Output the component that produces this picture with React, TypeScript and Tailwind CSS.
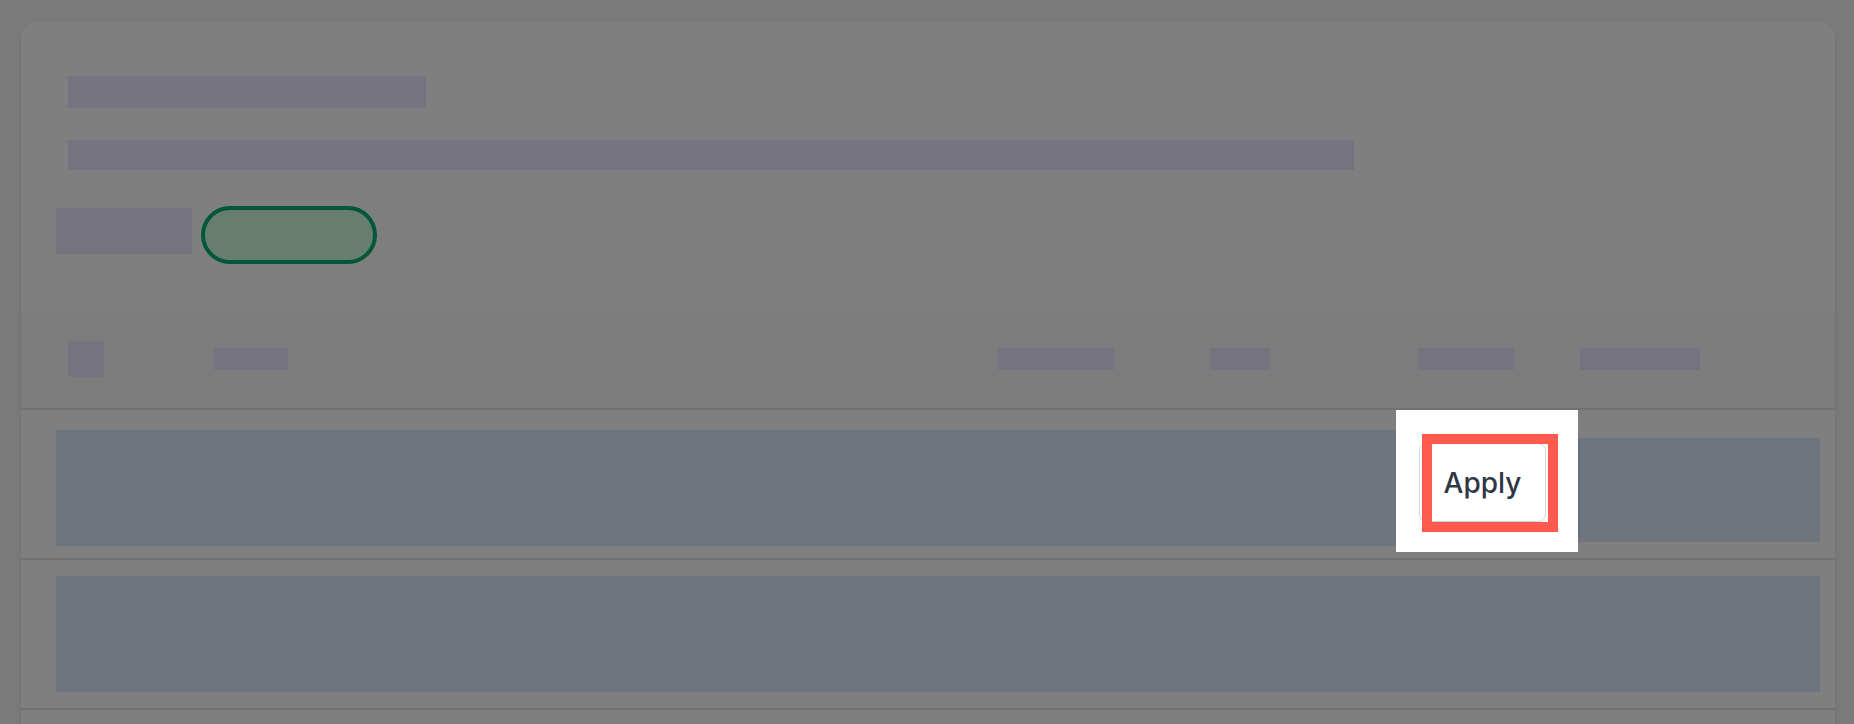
import React from "react";

const headerBars = [
  { ml: "ml-[110px]", w: "w-[74px]" },
  { ml: "ml-[710px]", w: "w-[116px]" },
  { ml: "ml-[96px]", w: "w-[60px]" },
  { ml: "ml-[148px]", w: "w-[96px]" },
  { ml: "ml-[66px]", w: "w-[120px]" },
];

export default function App() {
  return (
    <div
      className="relative h-[724px] overflow-hidden bg-[#f4f4f5] pt-[22px]"
      style={{ fontFamily: "Inter, 'Liberation Sans', sans-serif" }}
    >
      {/* Card */}
      <div className="ml-[21px] w-[1814px] overflow-hidden rounded-t-2xl bg-white shadow-md">
        {/* Top section */}
        <div className="px-[47px] pt-[54px] pb-[48px]">
          <div className="h-[32px] w-[358px] bg-[#eae7fe]" />
          <div className="mt-[32px] h-[30px] w-[1286px] bg-[#eae7fe]" />
          <div className="-ml-[12px] mt-[36px] flex items-start gap-[9px]">
            <div className="mt-[2px] h-[46px] w-[136px] bg-[#eae7fe]" />
            <div className="h-[58px] w-[176px] rounded-full border-4 border-[#00ae74] bg-[#cefadf]" />
          </div>
        </div>

        {/* Table header */}
        <div className="flex h-[98px] items-center border-b-2 border-[#e2e2e2] bg-[#f8f8f8] pb-[2px]">
          <div className="ml-[47px] h-[36px] w-[36px] rounded-sm bg-[#eae7fe]" />
          {headerBars.map((b, i) => (
            <div key={i} className={`${b.ml} ${b.w} h-[22px] bg-[#eae7fe]`} />
          ))}
        </div>

        {/* Rows */}
        <div className="border-b-2 border-[#e2e2e2] pt-[20px] pb-[12px] pl-[35px] pr-[15px]">
          <div className="flex h-[116px] items-start">
            <div className="h-[116px] w-[1341px] border-r border-[#cfe3fb] bg-[#dceaff]" />
            <div className="ml-[181px] mt-[8px] h-[104px] flex-1 border-l-2 border-[#cfe3fb] bg-[#dceaff]" />
          </div>
        </div>
        <div className="border-b-2 border-[#e2e2e2] py-[16px] pl-[35px] pr-[15px]">
          <div className="h-[116px] bg-[#dceaff]" />
        </div>
        <div className="h-[40px]" />
      </div>

      {/* Dim overlay */}
      <div className="absolute inset-0 bg-black/50" />

      {/* Spotlight on the Apply button */}
      <div className="absolute top-[410px] left-[1396px] h-[142px] w-[182px] bg-white">
        <button className="absolute top-[33px] left-[23px] flex h-[79px] w-[127px] items-center justify-center rounded-lg border border-gray-300 bg-white text-[28px] font-medium text-[#2f3747]">
          Apply
        </button>
        <div className="absolute top-[24px] left-[26px] h-[98px] w-[136px] border-[10px] border-[#ff5a4d]" />
      </div>
    </div>
  );
}
